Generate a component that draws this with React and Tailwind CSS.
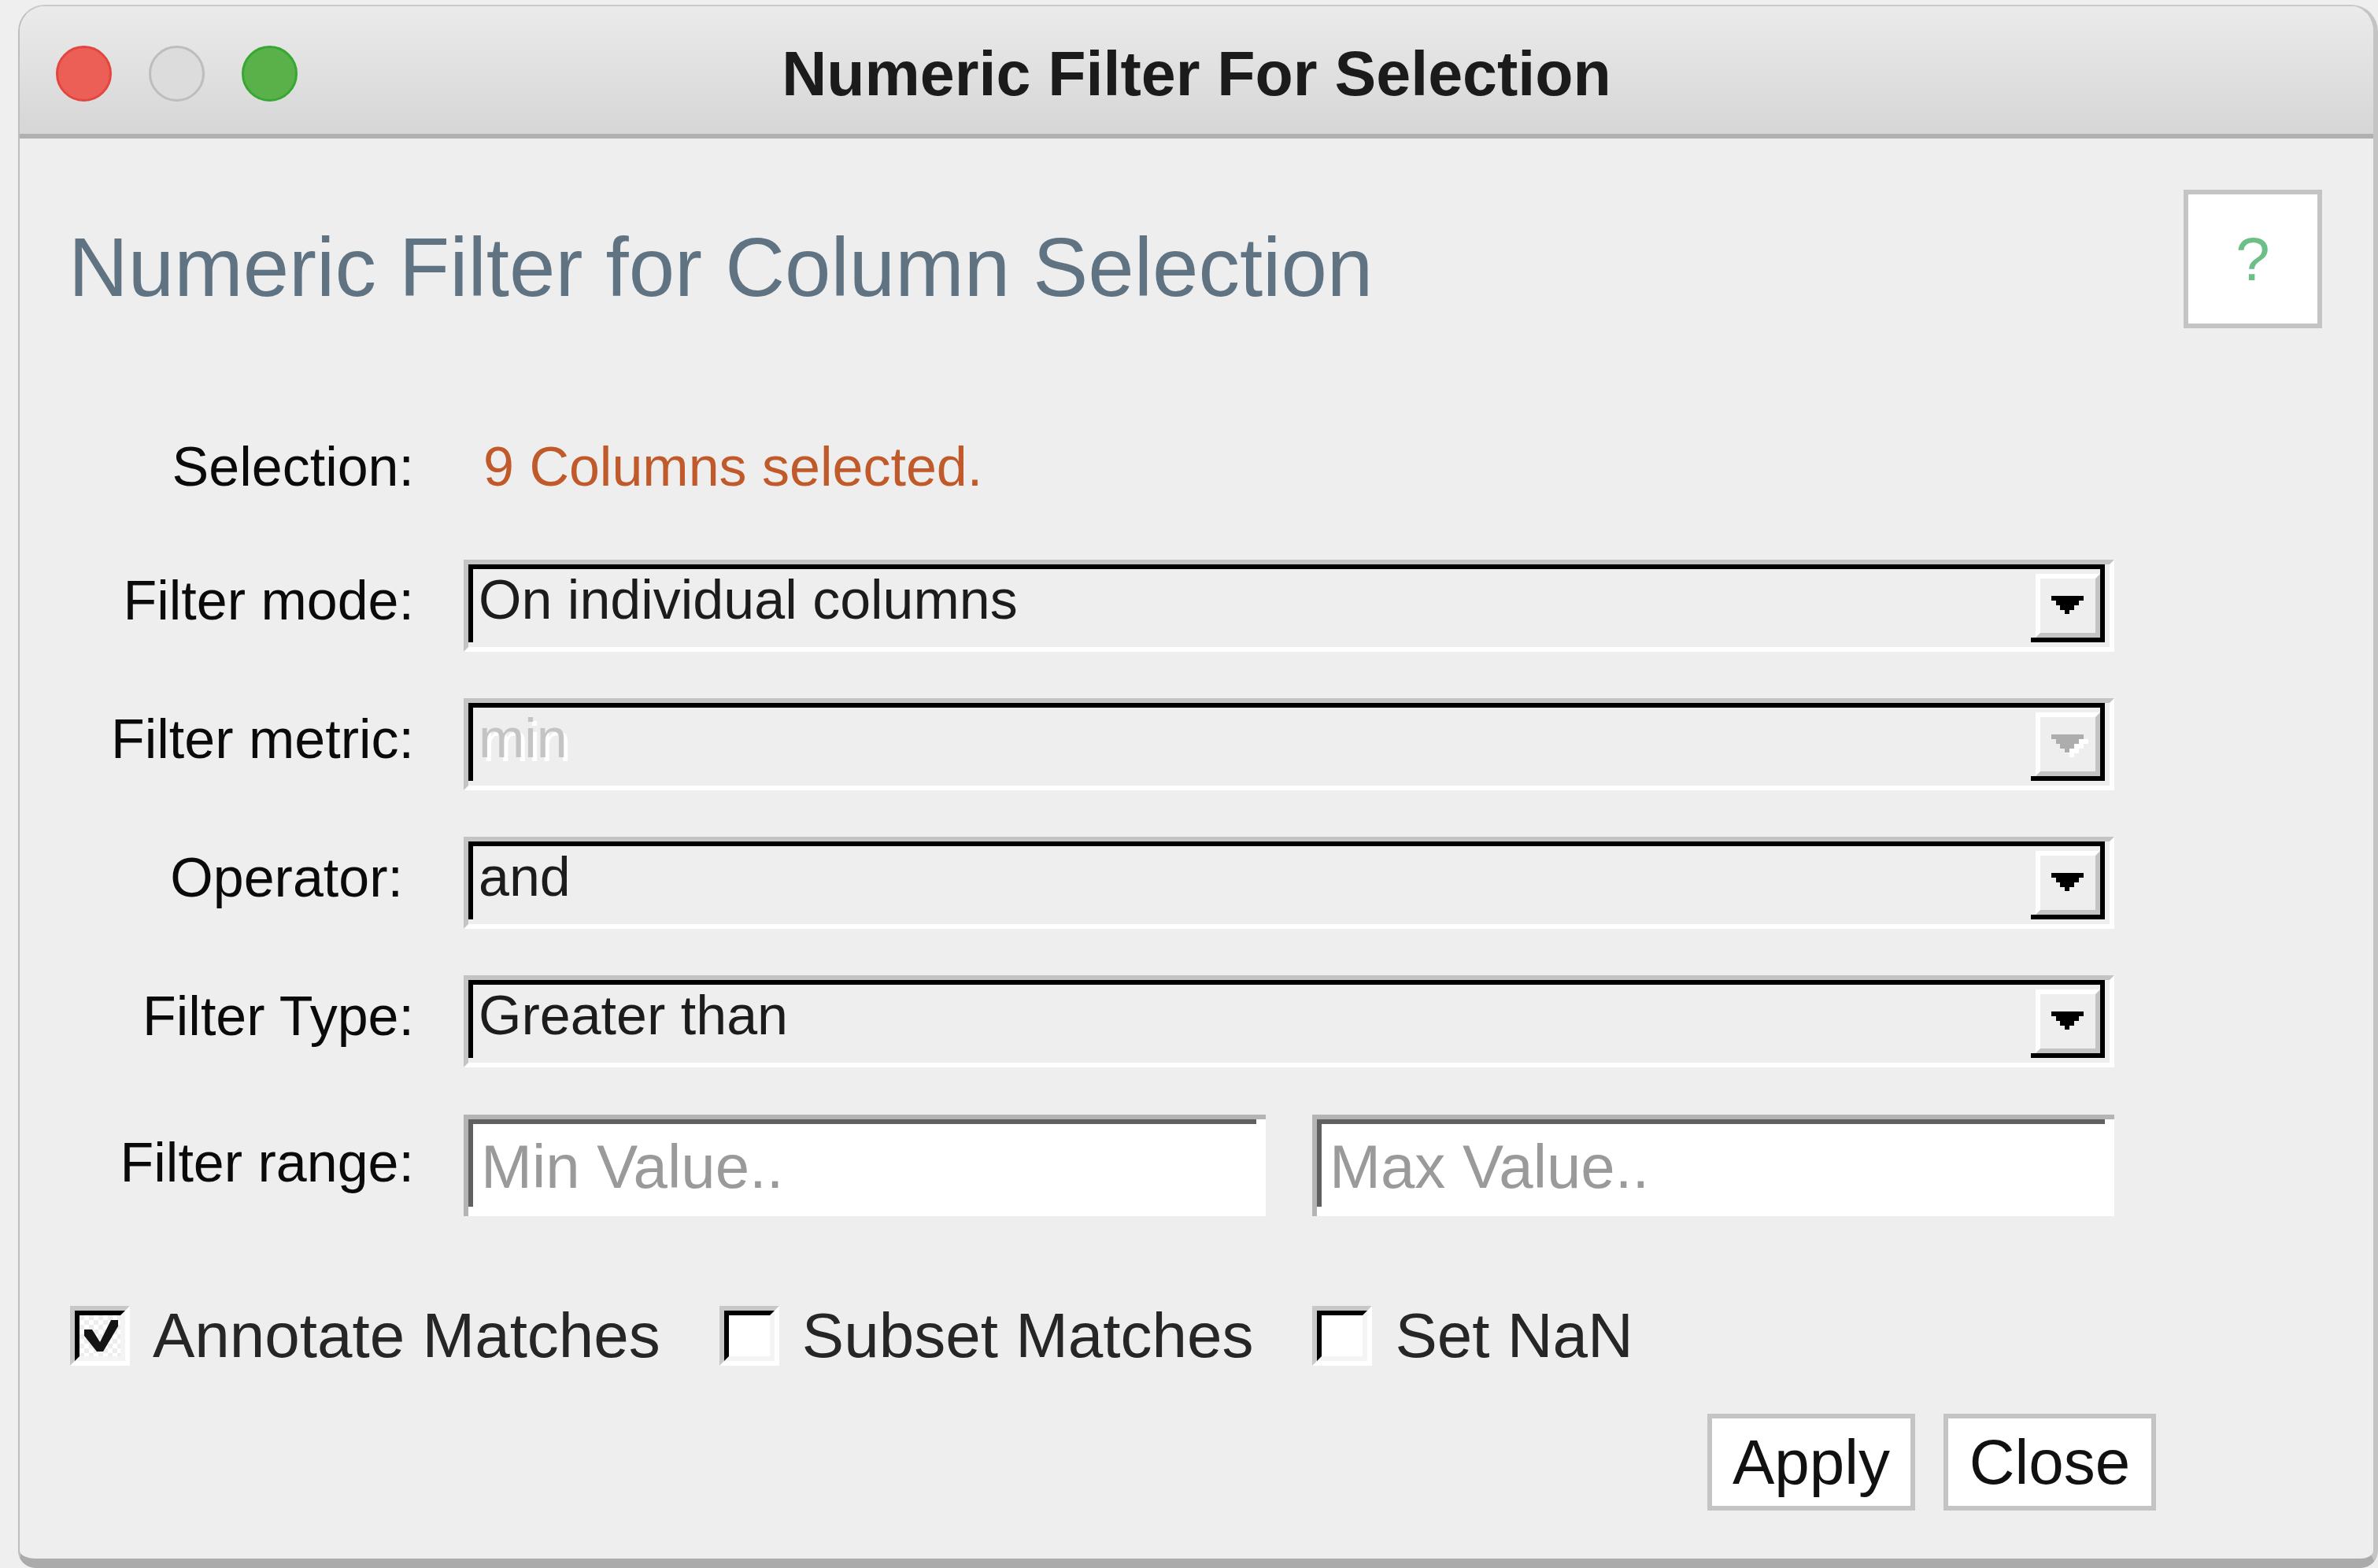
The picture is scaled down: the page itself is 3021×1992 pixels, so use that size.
import React from 'react';

const ArrowDown = ({ disabled = false }) => (
  <svg width="47" height="29" viewBox="0 0 47 29">
    {disabled && (
      <path d="M0 0H41V6H35V12H29V18H23V23H17V18H11V12H6V6H0Z" fill="#ffffff" transform="translate(6 6)" />
    )}
    <path d="M0 0H41V6H35V12H29V18H23V23H17V18H11V12H6V6H0Z" fill={disabled ? '#adadad' : '#000000'} />
  </svg>
);

const ComboBox = ({ value, disabled = false }) => (
  <div className="h-[117px] w-[2097px] border-t-[6px] border-l-[6px] border-r-[6px] border-b-[6px] border-t-[#c4c4c4] border-l-[#c4c4c4] border-r-white border-b-white pr-[6px] pb-[6px]">
    <div className="flex h-full border-t-[6px] border-l-[6px] border-r-[6px] border-black">
      <div
        className={`flex-1 pl-[7px] pt-[4px] text-[70px] leading-none ${
          disabled ? 'text-[#c4c4c4] [text-shadow:5px_5px_0_#ffffff]' : 'text-[#1c1c1c]'
        }`}
      >
        {value}
      </div>
      <div className="flex h-full w-[88px] flex-col border-b-[6px] border-black pt-[6px] pl-[6px]">
        <div className="flex flex-1 items-center justify-center border-t-[6px] border-l-[6px] border-r-[6px] border-b-[6px] border-t-white border-l-white border-r-[#c4c4c4] border-b-[#c4c4c4] bg-[#eeeeee] pl-[4px] pt-[4px]">
          <ArrowDown disabled={disabled} />
        </div>
      </div>
    </div>
  </div>
);

const TextField = ({ placeholder }) => (
  <div className="h-[129px] flex-1 border-t-[6px] border-l-[6px] border-[#b4b4b4] bg-white pr-[12px] pb-[12px]">
    <div className="h-full border-t-[6px] border-l-[6px] border-[#606060] pl-[10px] pt-[15px] text-[78px] leading-none text-[#9a9a9a]">
      {placeholder}
    </div>
  </div>
);

const Checkbox = ({ checked, label }) => (
  <div className="flex items-center gap-[29px]">
    <div className="h-[76px] w-[76px] border-t-[6px] border-l-[6px] border-r-[6px] border-b-[6px] border-t-[#c8c8c8] border-l-[#c8c8c8] border-r-white border-b-white">
      <div
        className={`h-full w-full border-t-[6px] border-l-[6px] border-r-[6px] border-b-[6px] border-t-black border-l-black border-r-[#f4f4f4] border-b-[#f4f4f4] ${
          checked
            ? 'bg-[repeating-conic-gradient(#ffffff_0_25%,#ededed_0_50%)] bg-[length:12px_12px]'
            : 'bg-white'
        }`}
      >
        {checked && (
          <svg width="52" height="52" viewBox="0 0 52 52">
            <path d="M6 18H16L26 34L40 6H49V14L30 46H22L6 26Z" fill="#141414" />
          </svg>
        )}
      </div>
    </div>
    <span className="text-[80px] leading-none text-[#262626]">{label}</span>
  </div>
);

const Label = ({ children, className = '' }) => (
  <div className={`w-[437px] shrink-0 text-right text-[70px] leading-none text-[#0a0a0a] ${className}`}>
    {children}
  </div>
);

export default function App() {
  return (
    <div className="h-[1992px] w-[3021px] overflow-hidden bg-[#efefef] pl-[23px] pt-[6px] font-['Liberation_Sans',Arial,sans-serif]">
      <div className="flex h-[1986px] w-[2998px] flex-col overflow-hidden rounded-t-[34px] rounded-b-[22px] border-t-[2px] border-l-[2px] border-r-[6px] border-b-[12px] border-t-[#c9c9c9] border-l-[#bdbdbd] border-r-[#c4c4c4] border-b-[#ababab] bg-[#eeeeee]">
        {/* Title bar */}
        <div className="grid h-[168px] shrink-0 grid-cols-[1fr_auto_1fr] items-center border-b-[6px] border-[#b0b0b0] bg-gradient-to-b from-[#ebebeb] to-[#d6d6d6] pt-[8px]">
          <div className="flex items-center gap-[47px] pl-[46px]">
            <div className="h-[71px] w-[71px] rounded-full border-[3px] border-[#e2463f] bg-[#ec5f57]" />
            <div className="h-[71px] w-[71px] rounded-full border-[3px] border-[#bdbdbd] bg-[#dcdcdc]" />
            <div className="h-[71px] w-[71px] rounded-full border-[3px] border-[#36a832] bg-[#5ab14a]" />
          </div>
          <div className="text-[79px] font-bold leading-none text-[#1b1b1b]">Numeric Filter For Selection</div>
          <div />
        </div>

        {/* Body */}
        <div className="flex flex-1 flex-col pt-[65px] pl-[64px]">
          <div className="flex items-start justify-between pr-[65px]">
            <h1 className="-ml-[2px] mt-[46px] text-[105px] font-normal leading-none text-[#5f7382]">
              Numeric Filter for Column Selection
            </h1>
            <div className="flex h-[176px] w-[176px] items-center justify-center border-[6px] border-[#c4c4c4] bg-white text-[78px] leading-none text-[#6cbf86]">
              ?
            </div>
          </div>

          <div className="mt-[141px] flex items-start">
            <Label>Selection:</Label>
            <div className="ml-[88px] text-[70px] leading-none text-[#c15a2a]">9 Columns selected.</div>
          </div>

          <div className="mt-[83px] flex items-start">
            <Label className="pt-[17px]">Filter mode:</Label>
            <div className="ml-[63px]">
              <ComboBox value="On individual columns" />
            </div>
          </div>

          <div className="mt-[59px] flex items-start">
            <Label className="pt-[17px]">Filter metric:</Label>
            <div className="ml-[63px]">
              <ComboBox value="min" disabled />
            </div>
          </div>

          <div className="mt-[59px] flex items-start">
            <Label className="pt-[17px] pr-[14px]">Operator:</Label>
            <div className="ml-[63px]">
              <ComboBox value="and" />
            </div>
          </div>

          <div className="mt-[59px] flex items-start">
            <Label className="pt-[17px]">Filter Type:</Label>
            <div className="ml-[63px]">
              <ComboBox value="Greater than" />
            </div>
          </div>

          <div className="mt-[60px] flex items-start">
            <Label className="pt-[26px]">Filter range:</Label>
            <div className="ml-[63px] flex w-[2097px] gap-[59px]">
              <TextField placeholder="Min Value.." />
              <TextField placeholder="Max Value.." />
            </div>
          </div>

          <div className="mt-[112px] flex items-center gap-[75px]">
            <Checkbox checked label="Annotate Matches" />
            <Checkbox label="Subset Matches" />
            <Checkbox label="Set NaN" />
          </div>

          <div className="mt-[59px] flex justify-end gap-[36px] pr-[276px]">
            <button className="flex h-[123px] w-[264px] items-center justify-center border-[6px] border-[#c4c4c4] bg-white text-[80px] leading-none text-[#111111]">
              Apply
            </button>
            <button className="flex h-[123px] w-[270px] items-center justify-center border-[6px] border-[#c4c4c4] bg-white text-[80px] leading-none text-[#111111]">
              Close
            </button>
          </div>
        </div>
      </div>
    </div>
  );
}
